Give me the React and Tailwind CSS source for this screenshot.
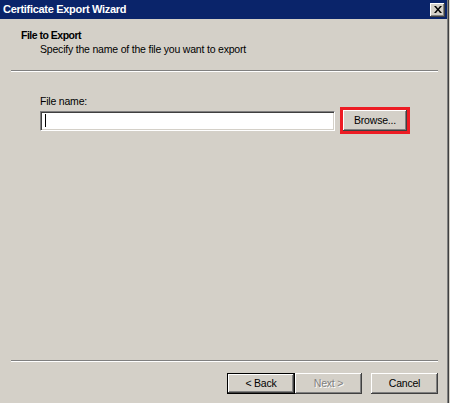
import React from 'react';

const raised =
  'shadow-[inset_-1px_-1px_0_#404040,inset_1px_1px_0_#ffffff,inset_-2px_-2px_0_#808080]';

const WinButton = ({ children, isDefault, disabled, className = '' }) => (
  <button
    className={`h-[21px] bg-[#d4d0c8] flex items-center justify-center ${raised} ${
      isDefault ? 'border border-black' : ''
    } ${disabled ? 'text-[#808080] [text-shadow:1px_1px_0_#ffffff]' : 'text-black'} ${className}`}
  >
    {children}
  </button>
);

const Separator = ({ className = '' }) => (
  <div className={`h-[2px] ml-[11px] mr-[9px] border-t border-[#808080] border-b border-b-white ${className}`} />
);

const App = () => {
  return (
    <div className="w-[450px] h-[403px] flex bg-[#d4d0c8] text-[10.5px] tracking-[-0.2px] leading-[13px] text-black font-['Liberation_Sans',Tahoma,sans-serif]">
      <div className="flex-1 flex flex-col">
        {/* title bar */}
        <div className="h-[19px] bg-[#0a246a] flex items-center justify-between pl-[3px] pr-[2px]">
          <span className="text-white font-bold text-[11px] tracking-[-0.3px]">Certificate Export Wizard</span>
          <div className={`w-[15px] h-[14px] bg-[#d4d0c8] flex items-center justify-center ${raised}`}>
            <svg width="8" height="7" viewBox="0 0 8 7">
              <path d="M0 0h2l2 2.5L6 0h2L5 3.5 8 7H6L4 4.5 2 7H0l3-3.5z" fill="#000" />
            </svg>
          </div>
        </div>

        {/* header */}
        <div className="h-[51px] pt-[10px]">
          <div className="pl-[21px] font-bold tracking-[-0.5px]">File to Export</div>
          <div className="pl-[40px] mt-[1px]">Specify the name of the file you want to export</div>
        </div>
        <Separator />

        {/* body */}
        <div className="flex-1 flex flex-col pl-[40px] pt-[23px]">
          <div>File name:</div>
          <div className="flex items-center mt-[-1px]">
            <div className="w-[295px] h-[20px] bg-white border border-t-[#808080] border-l-[#808080] border-b-white border-r-white shadow-[inset_1px_1px_0_#404040,inset_-1px_-1px_0_#d4d0c8] flex items-center pl-[4px]">
              <div className="w-[1px] h-[13px] bg-black" />
            </div>
            <div className="ml-[5px] border-[3px] border-[#ed1c24]">
              <WinButton className="w-[64px]">Browse...</WinButton>
            </div>
          </div>
        </div>

        {/* footer */}
        <Separator />
        <div className="h-[41px] flex items-start pt-[11px] pl-[227px]">
          <WinButton isDefault className="w-[68px]">&lt; Back</WinButton>
          <WinButton disabled className="w-[67px]">Next &gt;</WinButton>
          <WinButton className="w-[67px] ml-[9px]">Cancel</WinButton>
        </div>
      </div>
      <div className="w-[3px] flex">
        <div className="w-[1px] bg-[#808080]" />
        <div className="w-[1px] bg-[#404040]" />
        <div className="w-[1px] bg-[#d4d0c8]" />
      </div>
    </div>
  );
};

export default App;
